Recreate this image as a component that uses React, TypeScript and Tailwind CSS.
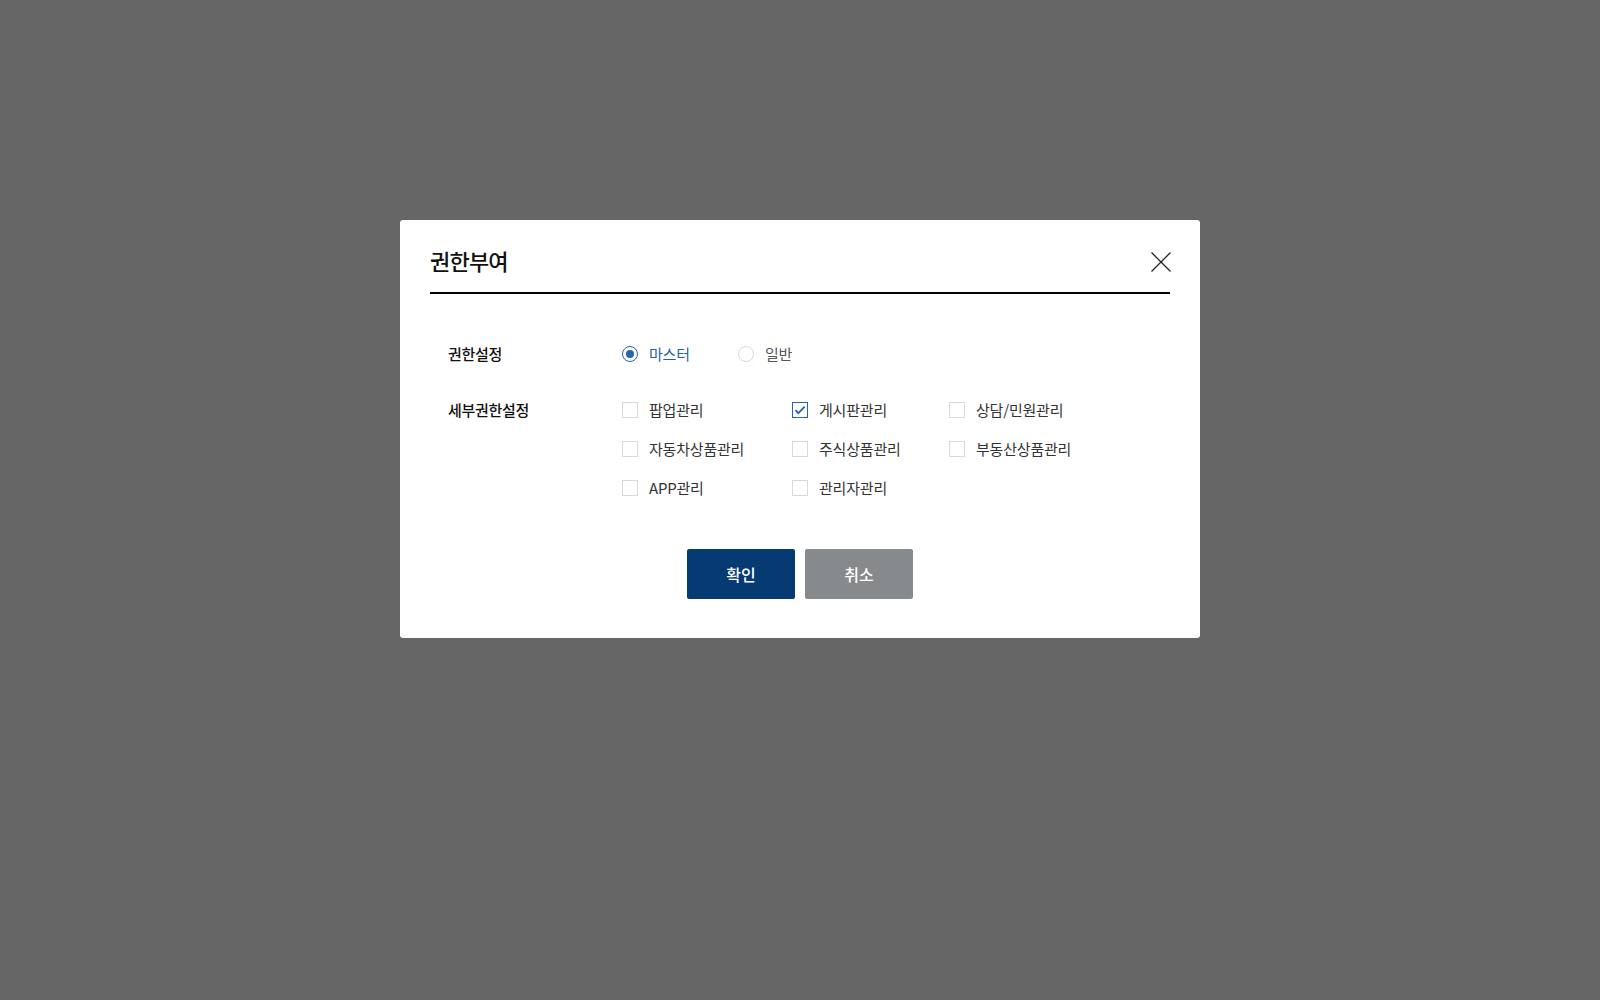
import React, { useState } from 'react';

const font = { fontFamily: '"Noto Sans CJK KR", "Noto Sans", sans-serif' };

const Radio = ({ checked, label, onClick }: { checked: boolean; label: string; onClick: () => void }) => (
  <label onClick={onClick} className="flex items-center w-[116px] h-6 cursor-pointer">
    <span
      className={`w-4 h-4 rounded-full border flex items-center justify-center ${
        checked ? 'border-[#2565b0]' : 'border-[#d9d9d9]'
      }`}
    >
      {checked && <span className="w-2 h-2 rounded-full bg-[#2565b0]" />}
    </span>
    <span className={`ml-[11px] text-[15px] tracking-[-0.2px] ${checked ? 'text-[#1f5fae]' : 'text-[#555]'}`}>{label}</span>
  </label>
);

const Check = ({ checked, label, width, onClick }: { checked: boolean; label: string; width: string; onClick: () => void }) => (
  <label onClick={onClick} className={`flex items-center h-6 cursor-pointer ${width}`}>
    <span
      className={`w-4 h-4 border flex items-center justify-center ${
        checked ? 'border-[#2565b0]' : 'border-[#d9d9d9]'
      }`}
    >
      {checked && (
        <svg width="12" height="10" viewBox="0 0 12 10" fill="none">
          <path d="M1.5 5.2 4.4 8.2 10.6 1.6" stroke="#2565b0" strokeWidth="1.8" />
        </svg>
      )}
    </span>
    <span className="ml-[11px] text-[15px] tracking-[-0.2px] text-[#333]">{label}</span>
  </label>
);

const items = [
  '팝업관리',
  '게시판관리',
  '상담/민원관리',
  '자동차상품관리',
  '주식상품관리',
  '부동산상품관리',
  'APP관리',
  '관리자관리',
];
const widths = ['w-[170px]', 'w-[157px]', 'w-[160px]'];

export default function App() {
  const [role, setRole] = useState<'master' | 'normal'>('master');
  const [checked, setChecked] = useState<string[]>(['게시판관리']);

  const toggle = (name: string) =>
    setChecked((c) => (c.includes(name) ? c.filter((x) => x !== name) : [...c, name]));

  return (
    <div className="min-h-screen bg-[#666666] flex justify-center pt-[220px]" style={font}>
      <div className="w-[800px] h-[418px] bg-white rounded-[3px] px-[30px] pt-[24px]">
        {/* header */}
        <div className="flex items-center justify-between pb-[12px] border-b-2 border-black">
          <h2 className="text-[22px] leading-8 pb-1 font-medium text-[#111] tracking-[-0.8px]">권한부여</h2>
          <button className="w-5 h-5 mr-[-1px]">
            <svg width="20" height="20" viewBox="0 0 20 20" fill="none">
              <path d="M0.5 0.5 19.5 19.5M19.5 0.5 0.5 19.5" stroke="#222" strokeWidth="1.3" />
            </svg>
          </button>
        </div>

        {/* body */}
        <div className="pl-[18px] pt-[48px]">
          <div className="flex items-center h-6">
            <div className="w-[174px] text-[15px] font-medium text-[#111] tracking-[-0.3px]">권한설정</div>
            <Radio checked={role === 'master'} label="마스터" onClick={() => setRole('master')} />
            <Radio checked={role === 'normal'} label="일반" onClick={() => setRole('normal')} />
          </div>

          <div className="flex mt-8">
            <div className="w-[174px] h-6 flex items-center text-[15px] font-medium text-[#111] tracking-[-0.3px]">세부권한설정</div>
            <div className="flex flex-wrap w-[487px] gap-y-[15px]">
              {items.map((name, i) => (
                <Check
                  key={name}
                  label={name}
                  width={widths[i % 3]}
                  checked={checked.includes(name)}
                  onClick={() => toggle(name)}
                />
              ))}
            </div>
          </div>
        </div>

        {/* buttons */}
        <div className="flex justify-center gap-[10px] mt-[49px]">
          <button className="w-[108px] h-[50px] rounded-[2px] bg-[#063a72] text-white text-base font-medium">확인</button>
          <button className="w-[108px] h-[50px] rounded-[2px] bg-[#878a8d] text-white text-base font-medium">취소</button>
        </div>
      </div>
    </div>
  );
}
